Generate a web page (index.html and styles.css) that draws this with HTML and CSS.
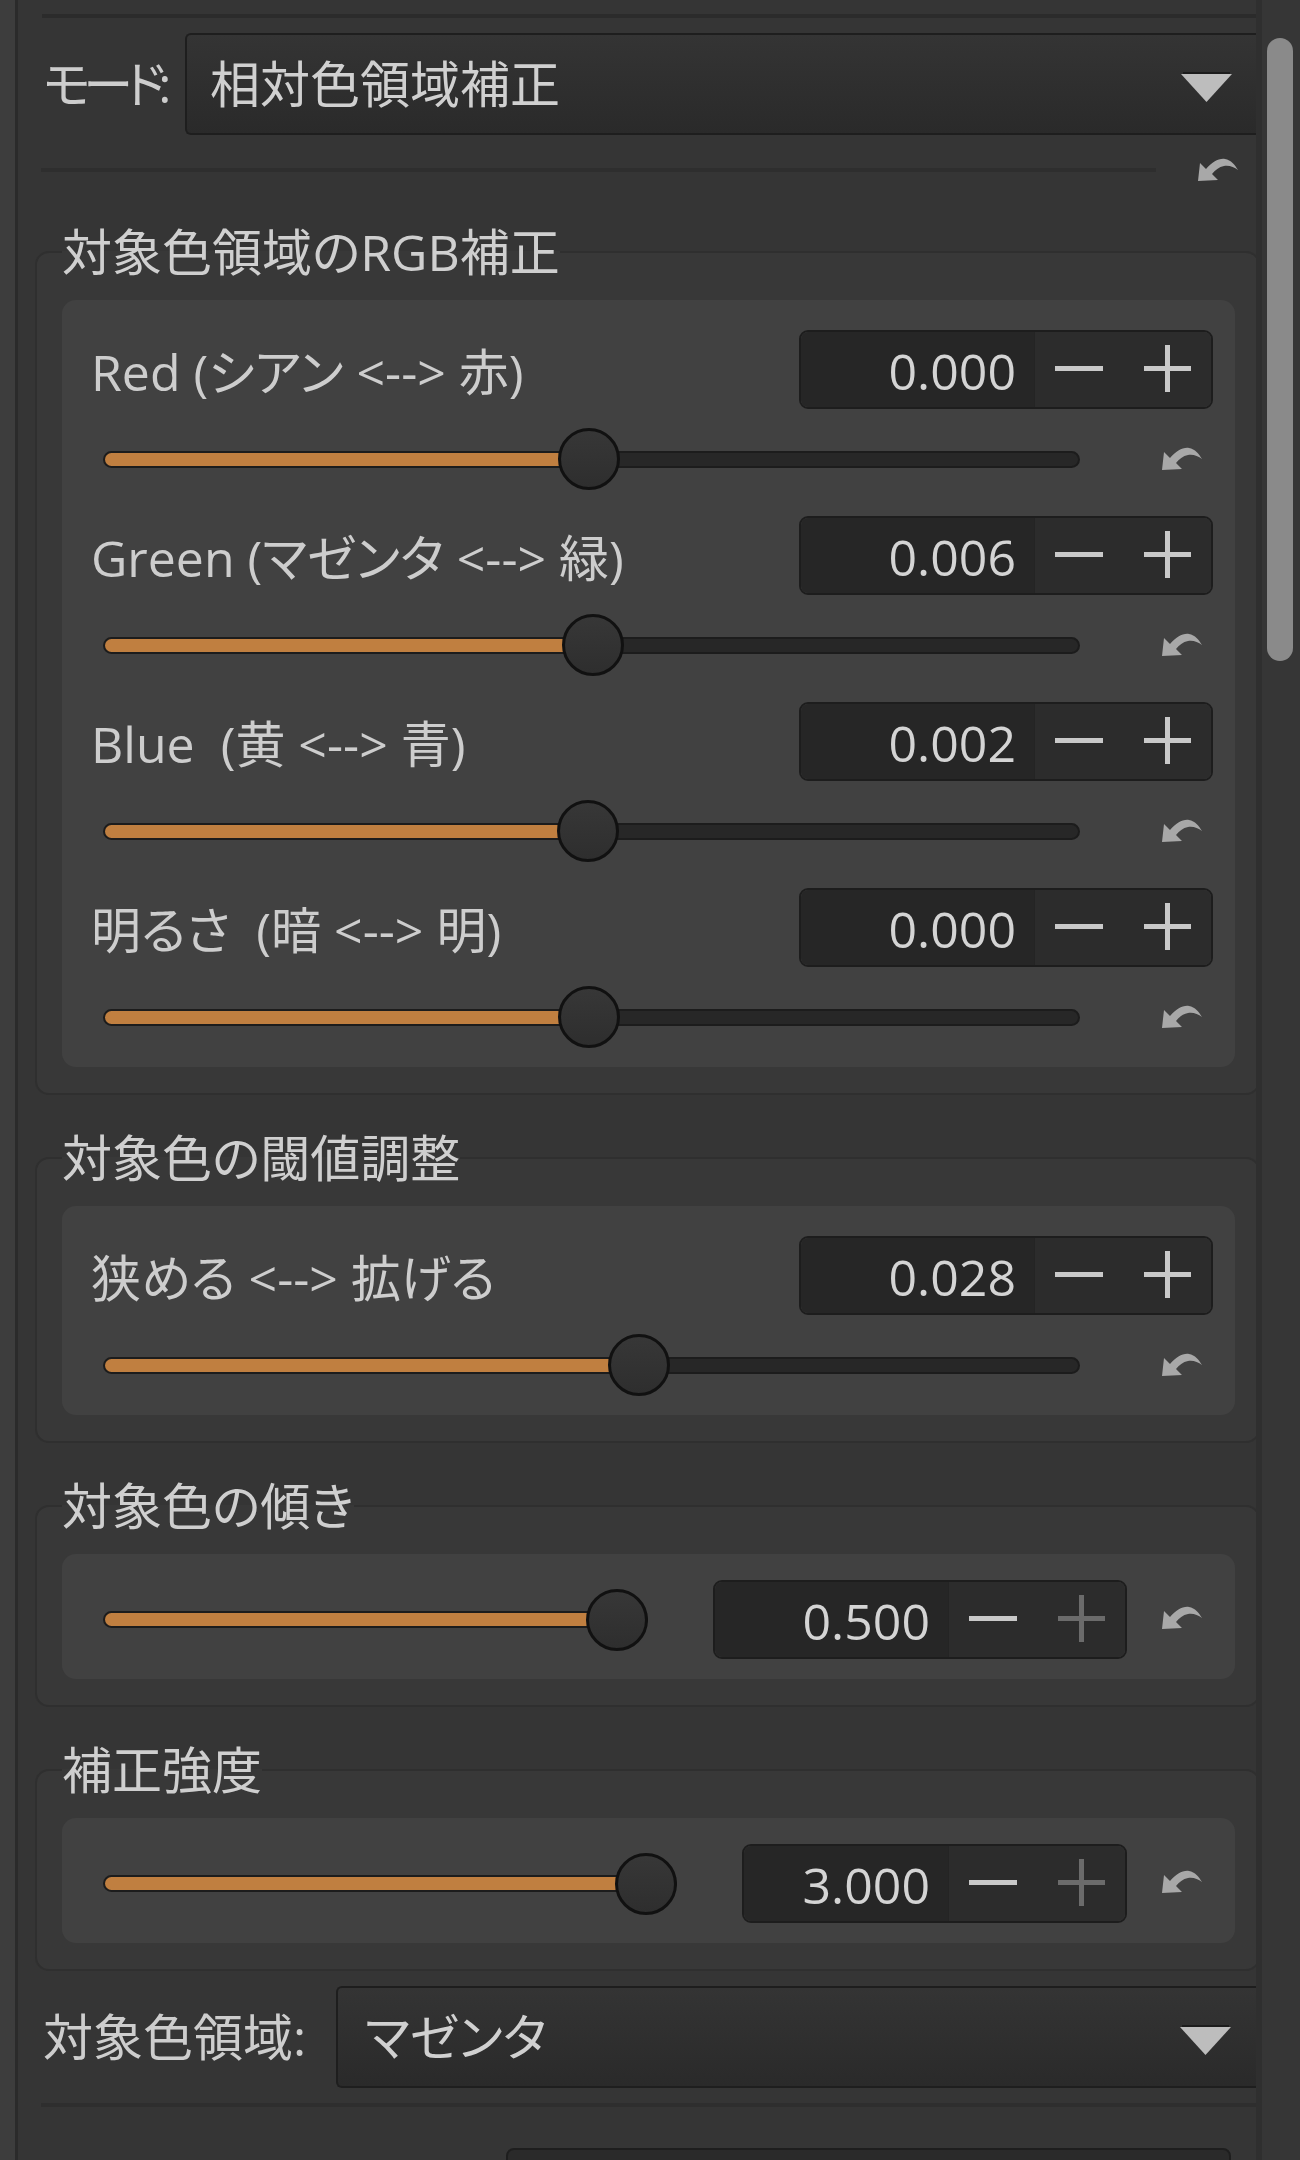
FILE: index.html
```html
<!DOCTYPE html>
<html lang="ja">
<head>
<meta charset="utf-8">
<title>相対色領域補正</title>
<link rel="stylesheet" href="styles.css">
</head>
<body>
<svg class="defs" width="0" height="0" aria-hidden="true">
  <defs>
    <symbol id="undo" viewBox="0 0 42 26">
      <path d="M1 24 L3 6 L9 12 C15 5 22 1 28 2 C34 3 38 8 41 13 C37 10 32 8 27 9 C22 10 18 13 15 17 L21 23 Z"/>
    </symbol>
    <symbol id="minus" viewBox="0 0 48 6"><rect x="0" y="0" width="48" height="5"/></symbol>
    <symbol id="plus" viewBox="0 0 47 47"><rect x="0" y="21" width="47" height="5"/><rect x="21" y="0" width="5" height="47"/></symbol>
    <symbol id="tri" viewBox="0 0 51 30"><rect x="2" y="0" width="47" height="2" fill="#1c1c1c"/><polygon points="0,2 51,2 25.5,30" fill="#bdbdbd"/></symbol>
  </defs>
</svg>
<div class="app">
  <div class="strip"></div>
  <div class="content">
    <div class="topline"></div>

    <div class="combo-row mode-row">
      <span class="combo-label mode-label">モード:</span>
      <div class="combo mode-combo">
        <span class="combo-text">相対色領域補正</span>
        <svg class="tri"><use href="#tri"/></svg>
      </div>
    </div>

    <div class="sep-row">
      <div class="sep"></div>
      <svg class="reset"><use href="#undo"/></svg>
    </div>

    <fieldset class="group first">
      <legend>対象色領域のRGB補正</legend>
      <div class="inner stack">
        <div class="item">
          <div class="item-top">
            <span class="label">Red (シアン &lt;--&gt; 赤)</span>
            <div class="spin"><div class="spin-val">0.000</div><div class="spin-btns"><span class="btn"><svg class="ico-minus"><use href="#minus"/></svg></span><span class="btn"><svg class="ico-plus"><use href="#plus"/></svg></span></div></div>
          </div>
          <div class="item-bottom">
            <div class="slider" style="--v:0.497"><div class="track"><div class="fill"></div></div><div class="knob"></div></div>
            <svg class="reset"><use href="#undo"/></svg>
          </div>
        </div>
        <div class="item">
          <div class="item-top">
            <span class="label">Green (マゼンタ &lt;--&gt; 緑)</span>
            <div class="spin"><div class="spin-val">0.006</div><div class="spin-btns"><span class="btn"><svg class="ico-minus"><use href="#minus"/></svg></span><span class="btn"><svg class="ico-plus"><use href="#plus"/></svg></span></div></div>
          </div>
          <div class="item-bottom">
            <div class="slider" style="--v:0.502"><div class="track"><div class="fill"></div></div><div class="knob"></div></div>
            <svg class="reset"><use href="#undo"/></svg>
          </div>
        </div>
        <div class="item">
          <div class="item-top">
            <span class="label">Blue&nbsp; (黄 &lt;--&gt; 青)</span>
            <div class="spin"><div class="spin-val">0.002</div><div class="spin-btns"><span class="btn"><svg class="ico-minus"><use href="#minus"/></svg></span><span class="btn"><svg class="ico-plus"><use href="#plus"/></svg></span></div></div>
          </div>
          <div class="item-bottom">
            <div class="slider" style="--v:0.496"><div class="track"><div class="fill"></div></div><div class="knob"></div></div>
            <svg class="reset"><use href="#undo"/></svg>
          </div>
        </div>
        <div class="item">
          <div class="item-top">
            <span class="label">明るさ&nbsp; (暗 &lt;--&gt; 明)</span>
            <div class="spin"><div class="spin-val">0.000</div><div class="spin-btns"><span class="btn"><svg class="ico-minus"><use href="#minus"/></svg></span><span class="btn"><svg class="ico-plus"><use href="#plus"/></svg></span></div></div>
          </div>
          <div class="item-bottom">
            <div class="slider" style="--v:0.497"><div class="track"><div class="fill"></div></div><div class="knob"></div></div>
            <svg class="reset"><use href="#undo"/></svg>
          </div>
        </div>
      </div>
    </fieldset>

    <fieldset class="group">
      <legend>対象色の閾値調整</legend>
      <div class="inner stack">
        <div class="item">
          <div class="item-top">
            <span class="label">狭める &lt;--&gt; 拡げる</span>
            <div class="spin"><div class="spin-val">0.028</div><div class="spin-btns"><span class="btn"><svg class="ico-minus"><use href="#minus"/></svg></span><span class="btn"><svg class="ico-plus"><use href="#plus"/></svg></span></div></div>
          </div>
          <div class="item-bottom">
            <div class="slider" style="--v:0.552"><div class="track"><div class="fill"></div></div><div class="knob"></div></div>
            <svg class="reset"><use href="#undo"/></svg>
          </div>
        </div>
      </div>
    </fieldset>

    <fieldset class="group">
      <legend>対象色の傾き</legend>
      <div class="inner single">
        <div class="slider" style="--v:1"><div class="track"><div class="fill"></div></div><div class="knob"></div></div>
        <div class="spin spin-inline"><div class="spin-val">0.500</div><div class="spin-btns"><span class="btn"><svg class="ico-minus"><use href="#minus"/></svg></span><span class="btn disabled"><svg class="ico-plus"><use href="#plus"/></svg></span></div></div>
        <svg class="reset"><use href="#undo"/></svg>
      </div>
    </fieldset>

    <fieldset class="group">
      <legend>補正強度</legend>
      <div class="inner single">
        <div class="slider" style="--v:1"><div class="track"><div class="fill"></div></div><div class="knob"></div></div>
        <div class="spin spin-inline narrow"><div class="spin-val">3.000</div><div class="spin-btns"><span class="btn"><svg class="ico-minus"><use href="#minus"/></svg></span><span class="btn disabled"><svg class="ico-plus"><use href="#plus"/></svg></span></div></div>
        <svg class="reset"><use href="#undo"/></svg>
      </div>
    </fieldset>

    <div class="combo-row target-row">
      <span class="combo-label target-label">対象色領域:</span>
      <div class="combo target-combo">
        <span class="combo-text">マゼンタ</span>
        <svg class="tri"><use href="#tri"/></svg>
      </div>
    </div>

    <div class="sep sep-bottom"></div>

    <div class="bottom-el"></div>
  </div>
  <div class="scrollbar"><div class="thumb"></div></div>
</div>
</body>
</html>
```

FILE: styles.css
```css
html, body {
  margin: 0;
  padding: 0;
}

body {
  background: #353535;
  color: #cdcdcd;
  font-family: "Open Sans", "Noto Sans CJK JP", sans-serif;
  font-size: 50px;
  font-feature-settings: "palt";
  width: 1300px;
  height: 2160px;
  overflow: hidden;
}

.defs {
  position: absolute;
  width: 0;
  height: 0;
}

.app {
  display: flex;
  width: 1300px;
  height: 2160px;
  overflow: hidden;
}

.strip {
  flex: 0 0 15px;
  background: #3d3d3d;
  border-right: 3px solid #2b2b2b;
}

.content {
  flex: 0 0 1238px;
  box-sizing: border-box;
  padding: 14px 0 0 17px;
  overflow: hidden;
  display: flex;
  flex-direction: column;
}

.topline {
  height: 4px;
  margin-left: 7px;
  background: #2b2b2b;
  flex: none;
}

/* combo rows */
.combo-row {
  display: flex;
  align-items: center;
  padding-left: 8px;
  flex: none;
}

.mode-row {
  margin-top: 15px;
}

.target-row {
  margin-top: 15px;
}

.combo-label {
  flex: none;
  line-height: 60px;
  white-space: nowrap;
}

.mode-label {
  width: 142px;
  letter-spacing: -7px;
}

.target-label {
  width: 293px;
}

.combo {
  flex: 1;
  height: 102px;
  box-sizing: border-box;
  border: 2px solid #1e1e1e;
  border-right: none;
  border-radius: 6px 0 0 6px;
  background: linear-gradient(#343434, #2a2a2a);
  display: flex;
  align-items: center;
  justify-content: space-between;
  padding: 0 24px 0 23px;
}

.target-combo {
  padding: 0 25px 0 27px;
}

.combo-text {
  line-height: 60px;
  color: #d0d0d0;
  white-space: nowrap;
}

.tri {
  width: 51px;
  height: 30px;
  margin-top: 6px;
}

/* separators */
.sep-row {
  margin-top: 22px;
  height: 26px;
  display: flex;
  align-items: center;
  padding-left: 6px;
  padding-right: 17px;
  flex: none;
}

.sep {
  height: 4px;
  background: #2e2e2e;
  flex: 1;
}

.sep-row .sep {
  margin-right: 41px;
}

.reset {
  flex: none;
  width: 42px;
  height: 26px;
  fill: #a8a8a8;
}

.sep-bottom {
  flex: none;
  margin: 15px 0 0 6px;
}

/* groups */
.group {
  flex: none;
  margin: 33px -4px 0 0;
  padding: 18px 23px 26px 25px;
  border: 2px solid #2f2f2f;
  border-radius: 14px;
  background: #383838;
  min-inline-size: 0;
}

.group.first {
  margin-top: 39px;
}

.group legend {
  padding: 0;
  margin: 0;
  line-height: 60px;
  color: #cfcfcf;
  white-space: nowrap;
}

.inner {
  background: #414141;
  border-radius: 14px;
}

.stack {
  display: flex;
  flex-direction: column;
  gap: 26px;
  padding: 30px 22px 19px 29px;
}

.item {
  display: flex;
  flex-direction: column;
  gap: 19px;
}

.item-top {
  display: flex;
  align-items: center;
  justify-content: space-between;
  height: 79px;
}

.label {
  line-height: 60px;
  white-space: nowrap;
  margin-top: 5px;
}

.item-bottom {
  display: flex;
  align-items: center;
  height: 62px;
  padding: 0 10px 0 12px;
}

.item-bottom .slider {
  margin-right: 81px;
}

.single {
  display: flex;
  align-items: center;
  padding: 26px 32px 20px 41px;
}

.single .spin {
  margin-left: 65px;
}

.single .reset {
  margin-left: 34px;
  margin-top: -4px;
}

/* slider */
.slider {
  flex: 1;
  position: relative;
  height: 62px;
  display: flex;
  align-items: center;
}

.track {
  flex: 1;
  height: 17px;
  box-sizing: border-box;
  border: 2px solid #1c1c1c;
  border-radius: 9px;
  background: #272727;
  overflow: hidden;
}

.fill {
  height: 100%;
  background: #c07f40;
  width: calc(29px + (100% - 58px) * var(--v));
}

.knob {
  position: absolute;
  top: 0;
  left: calc((100% - 62px) * var(--v));
  width: 62px;
  height: 62px;
  box-sizing: border-box;
  border-radius: 50%;
  border: 3px solid #111111;
  background: linear-gradient(#373737, #2e2e2e);
}

/* spin button */
.spin {
  flex: none;
  width: 414px;
  height: 79px;
  box-sizing: border-box;
  border: 2px solid #1d1d1d;
  border-radius: 9px;
  display: flex;
  overflow: hidden;
}

.spin.narrow {
  width: 385px;
}

.spin-val {
  flex: 1;
  background: #262626;
  text-align: right;
  padding-right: 18px;
  line-height: 79px;
  color: #d4d4d4;
}

.spin-btns {
  flex: 0 0 176px;
  display: flex;
  background: #2c2c2c;
  border-left: 1px solid #242424;
}

.btn {
  flex: 1;
  display: flex;
  align-items: center;
  justify-content: center;
  fill: #c9c9c9;
}

.btn.disabled {
  fill: #6b6b6b;
}

.ico-minus {
  width: 48px;
  height: 6px;
  margin-top: -2px;
}

.ico-plus {
  width: 47px;
  height: 47px;
  margin-top: -3px;
}

/* bottom partial element */
.bottom-el {
  flex: none;
  margin: 41px 0 0 471px;
  width: 725px;
  height: 60px;
  box-sizing: border-box;
  background: #2a2a2a;
  border: 2px solid #1e1e1e;
  border-radius: 8px;
}

/* scrollbar */
.scrollbar {
  flex: 0 0 44px;
  box-sizing: border-box;
  background: #363636;
  border-left: 6px solid #2f2f2f;
  padding: 38px 0 0 5px;
}

.thumb {
  width: 26px;
  height: 623px;
  border-radius: 13px;
  background: #8a8a8a;
}
```
